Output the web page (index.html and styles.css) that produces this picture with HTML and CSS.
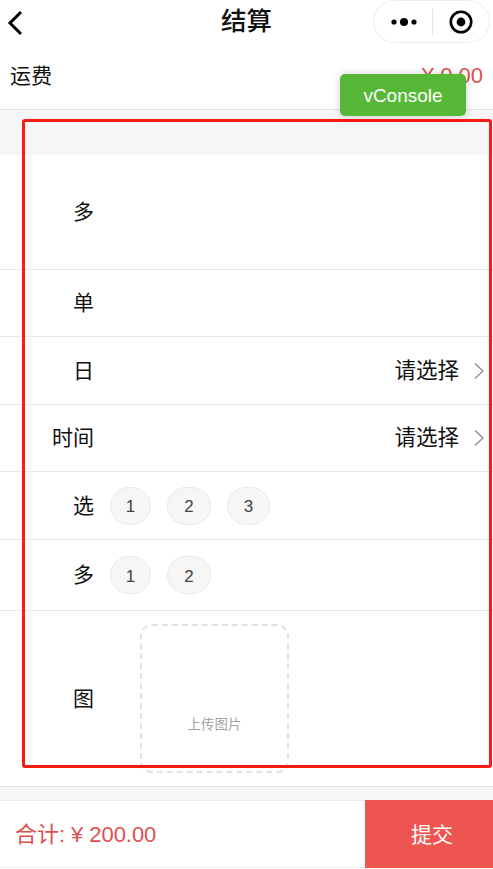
FILE: index.html
```html
<!DOCTYPE html>
<html lang="zh-CN">
<head>
<meta charset="utf-8">
<title>结算</title>
<link rel="stylesheet" href="styles.css">
</head>
<body>
<div class="page">
  <header class="nav">
    <svg class="back" width="18" height="26" viewBox="0 0 18 26"><path d="M15 2 L4 13 L15 24" fill="none" stroke="#000" stroke-width="3"/></svg>
    <h1 class="title">结算</h1>
    <div class="capsule">
      <svg class="dots" width="28" height="10" viewBox="0 0 28 10"><circle cx="4" cy="5" r="2.6"/><circle cx="14" cy="5" r="4"/><circle cx="24" cy="5" r="2.6"/></svg>
      <span class="capsule-sep"></span>
      <svg class="target" width="24" height="24" viewBox="0 0 24 24"><circle cx="12" cy="12" r="10.2" fill="none" stroke="#000" stroke-width="2.6"/><circle cx="12" cy="12" r="4.4"/></svg>
    </div>
  </header>
  <div class="freight">
    <span class="freight-label">运费</span>
    <span class="freight-price">¥ 0.00</span>
  </div>
  <div class="gap gap-top"></div>
  <section class="form">
    <div class="row row-a"><span class="label">多</span></div>
    <div class="row row-b"><span class="label">单</span></div>
    <div class="row row-c"><span class="label">日</span><span class="pick">请选择<svg class="chev" width="12" height="18" viewBox="0 0 12 18"><path d="M2 1.500 L10 9 L2 16.500" fill="none" stroke="#8c8c8c" stroke-width="1.300"/></svg></span></div>
    <div class="row row-d"><span class="label">时间</span><span class="pick">请选择<svg class="chev" width="12" height="18" viewBox="0 0 12 18"><path d="M2 1.500 L10 9 L2 16.500" fill="none" stroke="#8c8c8c" stroke-width="1.300"/></svg></span></div>
    <div class="row row-e"><span class="label">选</span>
      <div class="chips"><span class="chip chip-1">1</span><span class="chip chip-2">2</span><span class="chip chip-3">3</span></div>
    </div>
    <div class="row row-f"><span class="label">多</span>
      <div class="chips"><span class="chip chip-1">1</span><span class="chip chip-2">2</span></div>
    </div>
    <div class="row row-g"><span class="label">图</span>
      <div class="upload"><span class="upload-text">上传图片</span></div>
    </div>
  </section>
  <div class="gap gap-bottom"></div>
  <footer class="bar">
    <span class="total">合计: ¥ 200.00</span>
    <button class="submit">提交</button>
  </footer>
  <div class="outline"></div>
  <div class="vconsole">vConsole</div>
</div>
</body>
</html>
```
FILE: styles.css
```css
* { box-sizing: border-box; }
html, body { margin: 0; padding: 0; background: #fff; }
body { font-family: "Liberation Sans", "Noto Sans CJK SC", sans-serif; color: #111; }
.page { position: relative; width: 493px; height: 869px; overflow: hidden; }

.nav { position: relative; height: 48px; display: flex; align-items: flex-start; justify-content: center; }
.back { position: absolute; left: 6px; top: 10px; }
.title { margin: 0; font-size: 25.500px; font-weight: 500; line-height: 42px; color: #111; }
.capsule { position: absolute; left: 373px; top: 0; width: 117px; height: 43px; border: 1px solid #ececec; border-radius: 22px; display: flex; align-items: center; }
.dots { margin-left: 16px; }
.capsule-sep { width: 1px; height: 26px; background: #e4e4e4; margin-left: 14px; }
.target { margin-left: 16px; }

.freight { height: 62px; border-bottom: 1px solid #e3e3e3; display: flex; justify-content: space-between; align-items: flex-start; padding: 13px 10px 0; }
.freight-label { font-size: 21px; line-height: 30px; }
.freight-price { font-size: 22px; line-height: 30px; color: #dd5050; }

.gap { background: #f6f6f6; }
.gap-top { height: 45px; }
.gap-bottom { height: 13px; }

.row { display: flex; align-items: center; border-bottom: 1px solid #e9e9e9; padding-right: 8px; position: relative; }
.row-a { height: 115px; }
.row-b { height: 67px; }
.row-c { height: 68px; }
.row-d { height: 67px; }
.row-e { height: 68px; }
.row-f { height: 71px; }
.row-g { height: 176px; border-bottom-color: #e3e3e3; }
.label { width: 94px; flex: none; text-align: right; font-size: 21px; line-height: 30px; }
.pick { margin-left: auto; display: flex; align-items: center; font-size: 21.500px; line-height: 30px; }
.chev { margin-left: 14px; }

.chips { display: flex; margin-left: 16px; }
.chip { height: 38px; padding-top: 3px; border: 1px solid #eaeaea; background: #f6f6f6; border-radius: 19px; display: flex; align-items: center; justify-content: center; font-size: 17px; color: #444; }
.chip-1 { width: 41px; }
.chip-2 { width: 44px; margin-left: 16px; }
.chip-3 { width: 43px; margin-left: 16px; }

.upload { width: 149px; height: 149px; margin-left: 46px; margin-top: -1px; border: 2px dashed #e2e2e2; border-radius: 12px; display: flex; justify-content: center; align-items: flex-end; padding-bottom: 36px; }
.upload-text { font-size: 13.500px; line-height: 20px; color: #a3a3a3; }

.bar { height: 68px; display: flex; align-items: stretch; justify-content: space-between; border-top: 1px solid #ececec; border-bottom: 1px solid #ececec; }
.total { align-self: center; padding-left: 15px; padding-bottom: 4px; font-size: 22px; letter-spacing: -0.050px; color: #dd5050; }
.submit { width: 128px; margin: -1px 0; border: 0; padding: 0 0 3px 6px; background: #ee5550; color: #fff; font: inherit; font-size: 21px; }

.outline { position: absolute; left: 22px; top: 119px; width: 470px; height: 649px; border: 3px solid #fc1a12; border-radius: 3px; }
.vconsole { position: absolute; left: 340px; top: 74px; width: 126px; height: 42px; background: #57b838; color: #fff; border-radius: 5px; font-size: 19px; line-height: 44px; text-align: center; box-shadow: 0 0 8px rgba(0,0,0,0.18); }
```
